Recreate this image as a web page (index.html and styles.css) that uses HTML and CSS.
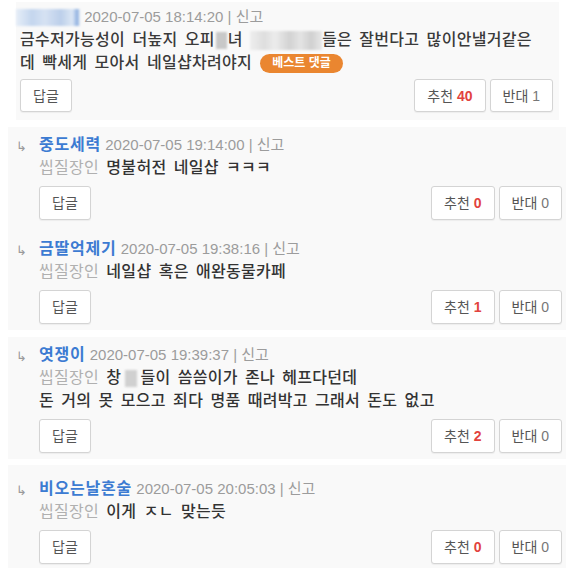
FILE: index.html
```html
<!DOCTYPE html>
<html lang="ko">
<head>
<meta charset="utf-8">
<title>댓글</title>
<link rel="stylesheet" href="styles.css">
</head>
<body>
<div class="thread">
  <div class="comment best">
    <div class="meta"><span class="mask mask-name"></span> <span class="date">2020-07-05 18:14:20 | 신고</span></div>
    <div class="body">금수저가능성이 더높지 오피<span class="mask mask-ch"></span>녀 <span class="mask mask-word"></span>들은 잘번다고 많이안낼거같은<br>데 빡세게 모아서 네일샵차려야지 <span class="badge">베스트 댓글</span></div>
    <div class="actions">
      <button class="btn">답글</button>
      <div class="votes">
        <button class="btn">추천 <b class="up">40</b></button>
        <button class="btn">반대 <span class="down">1</span></button>
      </div>
    </div>
  </div>

  <div class="group">
    <div class="reply">
      <span class="arrow">↳</span>
      <div class="reply-main">
        <div class="meta"><span class="user">중도세력</span> <span class="date">2020-07-05 19:14:00 | 신고</span></div>
        <div class="body"><span class="level">씹질장인</span> <span class="text">명불허전 네일샵 ㅋㅋㅋ</span></div>
        <div class="actions">
          <button class="btn">답글</button>
          <div class="votes">
            <button class="btn">추천 <b class="up">0</b></button>
            <button class="btn">반대 <span class="down">0</span></button>
          </div>
        </div>
      </div>
    </div>
    <div class="reply">
      <span class="arrow">↳</span>
      <div class="reply-main">
        <div class="meta"><span class="user">금딸억제기</span> <span class="date">2020-07-05 19:38:16 | 신고</span></div>
        <div class="body"><span class="level">씹질장인</span> <span class="text">네일샵 혹은 애완동물카페</span></div>
        <div class="actions">
          <button class="btn">답글</button>
          <div class="votes">
            <button class="btn">추천 <b class="up">1</b></button>
            <button class="btn">반대 <span class="down">0</span></button>
          </div>
        </div>
      </div>
    </div>
  </div>

  <div class="group">
    <div class="reply">
      <span class="arrow">↳</span>
      <div class="reply-main">
        <div class="meta"><span class="user">엿쟁이</span> <span class="date">2020-07-05 19:39:37 | 신고</span></div>
        <div class="body"><span class="level">씹질장인</span> <span class="text">창<span class="mask mask-ch2"></span>들이 씀씀이가 존나 헤프다던데<br>돈 거의 못 모으고 죄다 명품 때려박고 그래서 돈도 없고</span></div>
        <div class="actions">
          <button class="btn">답글</button>
          <div class="votes">
            <button class="btn">추천 <b class="up">2</b></button>
            <button class="btn">반대 <span class="down">0</span></button>
          </div>
        </div>
      </div>
    </div>
  </div>

  <div class="group group-last">
    <div class="reply">
      <span class="arrow">↳</span>
      <div class="reply-main">
        <div class="meta"><span class="user">비오는날혼술</span> <span class="date">2020-07-05 20:05:03 | 신고</span></div>
        <div class="body"><span class="level">씹질장인</span> <span class="text">이게 ㅈㄴ 맞는듯</span></div>
        <div class="actions">
          <button class="btn">답글</button>
          <div class="votes">
            <button class="btn">추천 <b class="up">0</b></button>
            <button class="btn">반대 <span class="down">0</span></button>
          </div>
        </div>
      </div>
    </div>
  </div>
</div>
</body>
</html>
```

FILE: styles.css
```css
* { box-sizing: border-box; }

body {
  margin: 0;
  background: #ffffff;
  font-family: "Liberation Sans", "Noto Sans CJK KR", sans-serif;
  font-size: 15px;
  color: #3a3a3a;
}

.thread {
  display: flex;
  flex-direction: column;
  gap: 7px;
  padding-top: 2px;
}

.comment {
  background: #f9f9f9;
  margin-left: 16px;
  width: 543px;
  padding: 3px 6px 8px 4px;
}

.group {
  background: #f9f9f9;
  margin-left: 8px;
  width: 558px;
  padding: 0 4px 0 9px;
  display: flex;
  flex-direction: column;
  gap: 5px;
}

.group-last { padding-top: 6px; margin-top: -1px; }

.reply {
  display: flex;
  padding: 6px 0;
}

.arrow {
  width: 23px;
  flex: none;
  font-size: 13px;
  line-height: 23px;
  color: #9a9a9a;
  padding-top: 2px;
  margin-left: -1px;
}

.reply-main { flex: 1; }

.meta, .body { line-height: 23px; white-space: nowrap; }

.body {
  font-size: 16px;
  font-weight: 500;
  letter-spacing: 0.3px;
  word-spacing: 2.5px;
  color: #3a3a3a;
}

.date { color: #9c9c9c; }

.user { color: #3c7bd2; font-weight: bold; font-size: 16px; letter-spacing: 0.8px; }

.level { color: #b0b0b0; font-weight: 400; }

.text { color: #333; }

.mask {
  display: inline-block;
  vertical-align: middle;
  filter: blur(1px);
}

.mask-name {
  width: 64px;
  height: 17px;
  background: linear-gradient(90deg, #e6eef8 0%, #c4d6ee 25%, #d6e2f3 45%, #bccfea 70%, #dce7f5 88%, #8fb0e0 96%, #e8eef6 100%);
  margin-left: -4px;
  vertical-align: -4px;
}

.mask-ch {
  width: 11px;
  height: 17px;
  background: #c8c8c8;
  margin: 0 1px;
}

.mask-word {
  width: 72px;
  height: 19px;
  background: linear-gradient(90deg, #eeeeee 0%, #dedede 20%, #ececec 35%, #d2d2d2 55%, #e4e4e4 70%, #d0d0d0 85%, #e8e8e8 100%);
}

.mask-ch2 {
  width: 12px;
  height: 17px;
  background: #d0d0d0;
  margin: 0 3px 0 4px;
}

.badge {
  display: inline-block;
  vertical-align: 1px;
  background: #ea8630;
  color: #fff;
  font-size: 12px;
  font-weight: bold;
  letter-spacing: 0;
  word-spacing: 0;
  line-height: 19px;
  padding: 0 12px;
  border-radius: 10px;
  margin-left: 1px;
}

.actions {
  display: flex;
  justify-content: space-between;
  align-items: center;
  margin-top: 7px;
}

.comment .actions { margin-top: 5px; }
.comment .btn { height: 33px; }

.votes { display: flex; gap: 4px; }

.btn {
  font-family: "Liberation Sans", "Noto Sans CJK KR", sans-serif;
  font-size: 14px;
  color: #555;
  background: #fff;
  border: 1px solid #d4d4d4;
  border-radius: 3px;
  box-shadow: 0 1px 1px rgba(0, 0, 0, 0.05);
  height: 34px;
  padding: 0 12px;
  line-height: 1;
}

.up { color: #e2433e; font-weight: bold; }
.down { color: #777; }
```
